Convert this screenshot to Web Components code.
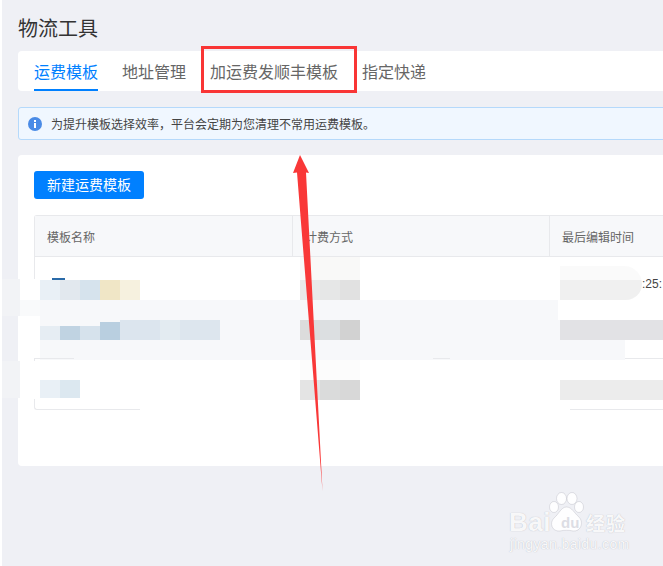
<!DOCTYPE html>
<html lang="zh">
<head>
<meta charset="utf-8">
<title>物流工具</title>
<style>
  html, body { margin: 0; height: 100%; overflow: hidden; }
  body { font-family: "Noto Sans CJK SC", "Liberation Sans", sans-serif; color: #333; background: #fff; }
</style>
</head>
<body>
<logistics-page>
  <tab-bar>
    <tab-item active>运费模板</tab-item>
    <tab-item>地址管理</tab-item>
    <tab-item>加运费发顺丰模板</tab-item>
    <tab-item>指定快递</tab-item>
  </tab-bar>
  <notice-bar>为提升模板选择效率，平台会定期为您清理不常用运费模板。</notice-bar>
  <template-card>
    <template-table></template-table>
  </template-card>
</logistics-page>
<mosaic-layer></mosaic-layer>
<screenshot-marks></screenshot-marks>
<baidu-mark></baidu-mark>
<script>
class LogisticsPage extends HTMLElement {
  constructor() {
    super();
    this.attachShadow({ mode: 'open' });
    this.shadowRoot.innerHTML = `
      <style>
        :host {
          display: flex;
          flex-direction: column;
          box-sizing: border-box;
          width: 673px;
          height: 566px;
          margin-left: 2px;
          padding: 0 0 0 16px;
          background: #eff0f5;
        }
        h1 {
          margin: 0;
          height: 51px;
          line-height: 56px;
          font-size: 20px;
          font-weight: 400;
          color: #333;
        }
      </style>
      <h1>物流工具</h1>
      <slot></slot>
    `;
  }
}

class TabBar extends HTMLElement {
  constructor() {
    super();
    this.attachShadow({ mode: 'open' });
    this.shadowRoot.innerHTML = `
      <style>
        :host {
          display: flex;
          gap: 24px;
          height: 40px;
          padding: 0 16px;
          background: #fff;
          border-radius: 4px 0 0 4px;
        }
      </style>
      <slot></slot>
    `;
  }
}

class TabItem extends HTMLElement {
  constructor() {
    super();
    this.attachShadow({ mode: 'open' });
    this.shadowRoot.innerHTML = `
      <style>
        :host {
          display: block;
          box-sizing: border-box;
          height: 40px;
          line-height: 41px;
          font-size: 16px;
          color: #666;
          white-space: nowrap;
          border-bottom: 2px solid transparent;
        }
        :host([active]) {
          color: #0080ff;
          border-bottom-color: #0080ff;
        }
      </style>
      <slot></slot>
    `;
  }
}

class NoticeBar extends HTMLElement {
  constructor() {
    super();
    this.attachShadow({ mode: 'open' });
    this.shadowRoot.innerHTML = `
      <style>
        :host {
          display: flex;
          align-items: center;
          gap: 9px;
          box-sizing: border-box;
          height: 33px;
          margin-top: 16px;
          padding: 0 9px;
          font-size: 12px;
          color: #444;
          background: #f0f7ff;
          border: 1px solid #b5d9fb;
          border-radius: 3px 0 0 3px;
        }
        svg { flex: none; }
      </style>
      <svg width="14" height="14" viewBox="0 0 14 14">
        <circle cx="7" cy="7" r="7" fill="#4a8be6"/>
        <rect x="6" y="6" width="2" height="5" fill="#fff"/>
        <rect x="6" y="3" width="2" height="2" fill="#fff"/>
      </svg>
      <span><slot></slot></span>
    `;
  }
}

class TemplateCard extends HTMLElement {
  constructor() {
    super();
    this.attachShadow({ mode: 'open' });
    this.shadowRoot.innerHTML = `
      <style>
        :host {
          display: block;
          box-sizing: border-box;
          height: 311px;
          margin-top: 15px;
          padding: 16px 0 0 16px;
          background: #fff;
          border-radius: 4px 0 0 4px;
        }
        button {
          display: block;
          width: 110px;
          height: 28px;
          margin: 0 0 16px;
          padding: 0 0 2px;
          font: inherit;
          font-size: 14px;
          line-height: 26px;
          color: #fff;
          background: #0080ff;
          border: 0;
          border-radius: 3px;
        }
      </style>
      <button>新建运费模板</button>
      <slot></slot>
    `;
  }
}

class TemplateTable extends HTMLElement {
  constructor() {
    super();
    this.attachShadow({ mode: 'open' });
    this.shadowRoot.innerHTML = `
      <style>
        :host {
          display: block;
          box-sizing: border-box;
          border: 1px solid #e8e9ec;
          border-right: 0;
          border-radius: 3px 0 0 3px;
          font-size: 12px;
        }
        .head, .row {
          display: grid;
          grid-template-columns: 258px 257px 1fr;
          box-sizing: border-box;
        }
        .head {
          height: 41px;
          line-height: 41px;
          color: #666;
          background: #f7f8fa;
          border-bottom: 1px solid #e8e9ec;
        }
        .head div { padding-left: 12px; border-right: 1px solid #e8e9ec; }
        .row { height: 51px; border-bottom: 1px solid #e8e9ec; }
        .row:last-child { height: 50px; border-bottom: 0; }
      </style>
      <div class="head">
        <div>模板名称</div>
        <div>计费方式</div>
        <div>最后编辑时间</div>
      </div>
      <div class="row"></div>
      <div class="row"></div>
      <div class="row"></div>
    `;
  }
}

// smears and pixelated blocks painted over the table in the screenshot
const SMEARS = [
  [2, 279, 18, 37, '#f2f3f6'], [20, 279, 20, 21, '#fff'],
  [2, 361, 18, 37, '#f2f3f6'], [20, 361, 60, 38, '#fff'],
  [283, 257, 275, 43, '#fff'], [283, 360, 275, 49, '#fff'],
  [140, 262, 143, 38, '#fff'], [549, 257, 70, 23, '#fff'],
  [20, 300, 20, 16, '#f9fafb'], [34, 316, 6, 42, '#fff'],
  [40, 300, 585, 60, '#f7f8fa'], [558, 300, 105, 20, '#fff'],
  [300, 257, 60, 43, '#f9f9f8'],
  [300, 360, 60, 20, '#fcfcfc'], [140, 402, 430, 12, '#fff'],
  [34, 358, 40, 1, '#e8e9ec'], [433, 358, 17, 1, '#e8e9ec'], [628, 358, 35, 1, '#e8e9ec']
];
const BLOCKS = [
  [40, 280, 20, '#e9f0f6'], [60, 280, 20, '#e2e8ee'], [80, 280, 20, '#d6e3ed'], [100, 280, 20, '#f0e6c6'], [120, 280, 20, '#f6f1df'],
  [40, 326, 20, '#e6edf3', 14], [60, 326, 20, '#c0d3e2', 14], [80, 326, 20, '#d6e2ec', 14], [100, 322, 20, '#b9cfe0', 18], [120, 320, 40, '#dce5ee'], [160, 320, 20, '#e3ebf1'], [180, 320, 40, '#dde6ee'],
  [40, 380, 20, '#e9f0f6', 18], [60, 380, 20, '#dce8f0', 18],
  [300, 280, 20, '#e9e9e9'], [320, 280, 20, '#e6e7e7'], [340, 280, 20, '#e1e1e1'],
  [300, 320, 20, '#dcdcdc'], [320, 320, 20, '#dcdfe1'], [340, 320, 20, '#d2d2d2'],
  [300, 380, 20, '#e4e4e4'], [320, 380, 20, '#dadbdb'], [340, 380, 20, '#d8d8d8'],
  [560, 320, 103, '#e2e2e5'], [560, 380, 103, '#ececec']
];

class MosaicLayer extends HTMLElement {
  constructor() {
    super();
    this.attachShadow({ mode: 'open' });
    const smears = SMEARS.map(([x, y, w, h, c]) =>
      `<i style="left:${x}px;top:${y}px;width:${w}px;height:${h}px;background:${c}"></i>`).join('');
    const blocks = BLOCKS.map(([x, y, w, c, h = 20]) =>
      `<i style="left:${x}px;top:${y}px;width:${w}px;height:${h}px;background:${c}"></i>`).join('');
    this.shadowRoot.innerHTML = `
      <style>
        :host { position: absolute; inset: 0; overflow: hidden; pointer-events: none; }
        i { position: absolute; display: block; }
        .stamp {
          position: absolute; left: 560px; top: 266px; width: 82px; height: 34px;
          background: linear-gradient(#fafafa 0 14px, #f0f0f0 14px);
          border-radius: 0 20px 18px 0;
        }
        .frag { position: absolute; left: 52px; top: 278px; width: 13px; height: 2px; background: #2a6aa8; }
        .time {
          position: absolute; left: 642px; top: 274px; line-height: 20px; font-size: 12px;
          font-family: "Liberation Sans", sans-serif; color: #444; white-space: nowrap;
        }
      </style>
      ${smears}
      <div class="frag"></div>
      <div class="stamp"></div>
      <span class="time">:25:</span>
      ${blocks}
    `;
  }
}

class ScreenshotMarks extends HTMLElement {
  constructor() {
    super();
    this.attachShadow({ mode: 'open' });
    this.shadowRoot.innerHTML = `
      <style>
        :host { position: absolute; inset: 0; pointer-events: none; }
        .box {
          position: absolute; left: 201px; top: 46px; width: 156px; height: 47px;
          box-sizing: border-box; border: 3px solid #f93535;
        }
        svg { position: absolute; left: 0; top: 0; }
      </style>
      <div class="box"></div>
      <svg width="663" height="566" viewBox="0 0 663 566">
        <path d="M300 155 L309 173 L306 172.500 L322.500 491 L297 172.500 L293 173 Z" fill="#f93838"/>
      </svg>
    `;
  }
}

class BaiduMark extends HTMLElement {
  constructor() {
    super();
    this.attachShadow({ mode: 'open' });
    this.shadowRoot.innerHTML = `
      <style>
        :host {
          position: absolute; left: 508px; top: 492px; width: 124px; height: 62px;
          color: rgba(255,255,255,.92);
          font-family: "Liberation Sans", sans-serif;
          text-shadow: 0 0 1px rgba(150,152,165,.7);
          pointer-events: none;
        }
        span { position: absolute; white-space: nowrap; }
        .bai { left: 1px; top: 15px; font-size: 26px; line-height: 30px; font-weight: 700; letter-spacing: .5px; }
        .du { left: 53px; top: 22px; font-size: 15px; line-height: 18px; font-weight: 700; color: #dcdde4; text-shadow: none; }
        .jy { left: 78px; top: 19px; font-size: 19px; line-height: 24px; font-family: "Noto Sans CJK SC", sans-serif; font-weight: 700; letter-spacing: 1px; }
        .url { left: 2px; top: 44px; font-size: 14px; line-height: 16px; letter-spacing: .4px; }
        svg { position: absolute; left: 40px; top: 0; }
      </style>
      <svg width="38" height="42" viewBox="0 0 38 42" fill="rgba(255,255,255,.92)" stroke="rgba(160,162,175,.5)" stroke-width=".6">
        <ellipse cx="6" cy="15" rx="4.500" ry="5.500"/>
        <ellipse cx="13.500" cy="6.500" rx="5" ry="6"/>
        <ellipse cx="24" cy="6.500" rx="5" ry="6"/>
        <ellipse cx="31" cy="15" rx="4.500" ry="5.500"/>
        <path d="M18.500 15 C24 15 26 21 31 25 C36 30 33 40 25 39 C21 38 16 38 12 39 C4 40 1 31 6 26 C11 22 13 15 18.500 15 Z"/>
      </svg>
      <span class="bai">Bai</span>
      <span class="du">du</span>
      <span class="jy">经验</span>
      <span class="url">jingyan.baidu.com</span>
    `;
  }
}

customElements.define('logistics-page', LogisticsPage);
customElements.define('tab-bar', TabBar);
customElements.define('tab-item', TabItem);
customElements.define('notice-bar', NoticeBar);
customElements.define('template-card', TemplateCard);
customElements.define('template-table', TemplateTable);
customElements.define('mosaic-layer', MosaicLayer);
customElements.define('screenshot-marks', ScreenshotMarks);
customElements.define('baidu-mark', BaiduMark);
</script>
</body>
</html>
